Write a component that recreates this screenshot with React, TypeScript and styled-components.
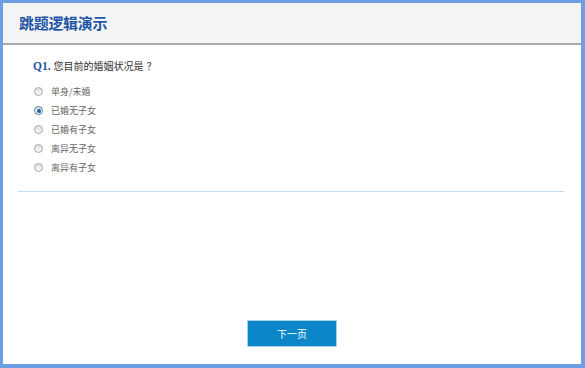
import React from "react";
import styled, { createGlobalStyle } from "styled-components";

const Global = createGlobalStyle`
  html, body { margin: 0; padding: 0; background: #ffffff; }
  body { font-family: "Liberation Sans", "Noto Sans CJK SC", sans-serif; }
  * { box-sizing: border-box; }
`;

const Frame = styled.div`
  width: 585px;
  height: 368px;
  display: flex;
  flex-direction: column;
  border-style: solid;
  border-color: #6d9de2;
  border-width: 3px 4px 4px 3px;
  background: #ffffff;
`;

const Header = styled.div`
  height: 42px;
  flex: none;
  display: flex;
  align-items: center;
  padding: 0 0 1px 16px;
  background: #f4f4f4;
  border-bottom: 2px solid #a8a8a8;
`;

const Title = styled.h1`
  margin: 0;
  font-family: "Noto Sans CJK SC", sans-serif;
  font-size: 15px;
  font-weight: 700;
  color: #1f56a5;
  letter-spacing: -0.3px;
`;

const Body = styled.div`
  flex: 1;
  display: flex;
  flex-direction: column;
  padding: 13px 17px 17px 15px;
`;

const Question = styled.div`
  display: flex;
  align-items: baseline;
  gap: 3px;
  padding-left: 15px;
  height: 16px;
  line-height: 16px;
`;

const QNum = styled.span`
  font-family: "Liberation Serif", serif;
  font-weight: 700;
  font-size: 11.5px;
  color: #1f56a5;
`;

const QText = styled.span`
  font-family: "Noto Sans CJK SC", sans-serif;
  font-size: 10px;
  color: #333333;
`;

const QMark = styled.span`
  margin-left: 3px;
`;

const Options = styled.div`
  display: flex;
  flex-direction: column;
  margin-top: 8px;
  padding-left: 15px;
`;

const Option = styled.label`
  display: flex;
  align-items: center;
  height: 19px;
  gap: 8px;
`;

const Radio = styled.span<{ $checked?: boolean }>`
  width: 9px;
  height: 9px;
  margin-left: 1px;
  border-radius: 50%;
  border: 1px solid ${(p) => (p.$checked ? "#5a7fa8" : "#a8a8a8")};
  background: linear-gradient(#dedede, #fafafa);
  display: flex;
  align-items: center;
  justify-content: center;
  &::after {
    content: "";
    width: 4px;
    height: 4px;
    border-radius: 50%;
    background: ${(p) => (p.$checked ? "#1c5ea3" : "transparent")};
  }
`;

const OptText = styled.span`
  font-family: "Noto Sans CJK SC", sans-serif;
  font-size: 9px;
  color: #666666;
`;

const Divider = styled.div`
  margin-top: 14px;
  height: 1px;
  background: #c6dbf3;
`;

const Footer = styled.div`
  margin-top: auto;
  display: flex;
  justify-content: center;
  padding-left: 2px;
`;

const NextButton = styled.button`
  width: 90px;
  height: 27px;
  background: #0b87c9;
  border: 1px solid #a9d2ea;
  color: #ffffff;
  font-family: "Noto Sans CJK SC", sans-serif;
  font-size: 10px;
  padding: 0;
  cursor: pointer;
`;

const options = ["单身/未婚", "已婚无子女", "已婚有子女", "离异无子女", "离异有子女"];

export default function App() {
  return (
    <>
      <Global />
      <Frame>
        <Header>
          <Title>跳题逻辑演示</Title>
        </Header>
        <Body>
          <Question>
            <QNum>Q1.</QNum>
            <QText>
              您目前的婚姻状况是<QMark>？</QMark>
            </QText>
          </Question>
          <Options>
            {options.map((o, i) => (
              <Option key={o}>
                <Radio $checked={i === 1} />
                <OptText>{o}</OptText>
              </Option>
            ))}
          </Options>
          <Divider />
          <Footer>
            <NextButton>下一页</NextButton>
          </Footer>
        </Body>
      </Frame>
    </>
  );
}
